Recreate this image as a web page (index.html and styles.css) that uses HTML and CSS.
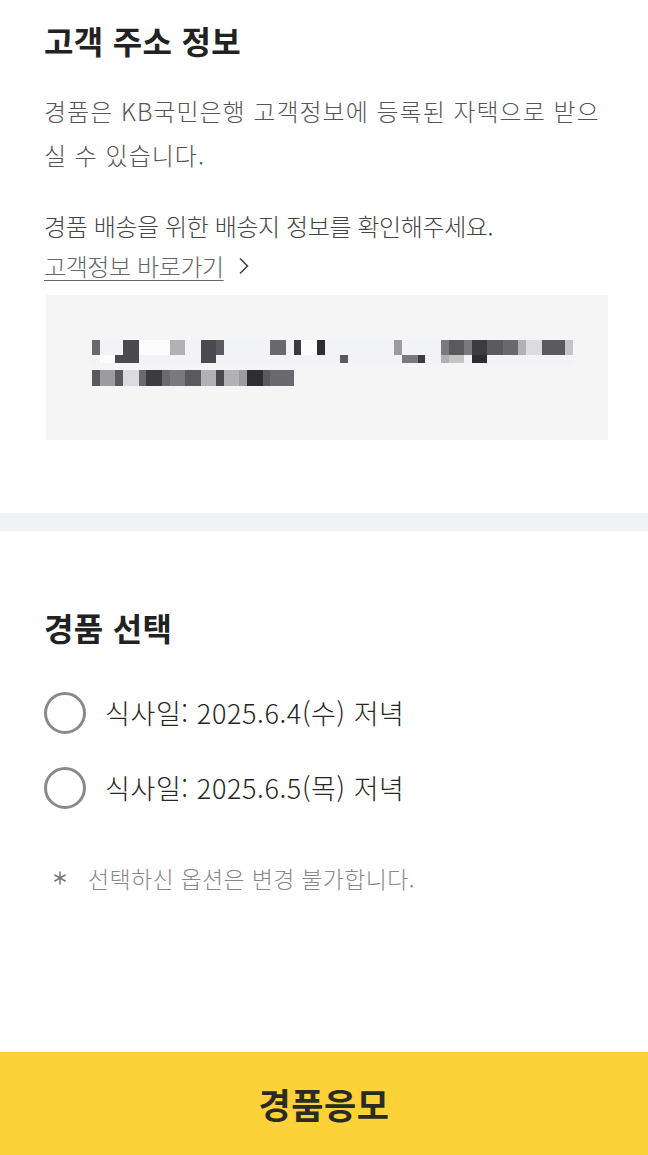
FILE: index.html
```html
<!DOCTYPE html>
<html lang="ko">
<head>
  <meta charset="UTF-8">
  <meta name="viewport" content="width=device-width, initial-scale=1.0">
  <title>경품응모</title>
  <link rel="stylesheet" href="styles.css">
</head>
<body>
  <div class="page">
    <div class="section address">
      <h2 class="title">고객 주소 정보</h2>
      <p class="desc">경품은 KB국민은행 고객정보에 등록된 자택으로 받으<br>실 수 있습니다.</p>
      <p class="guide">경품 배송을 위한 배송지 정보를 확인해주세요.</p>
      <a class="link" href="#">고객정보 바로가기
        <svg class="chev" width="12" height="18" viewBox="0 0 12 18"><path d="M2 1.5 L9.5 9 L2 16.5" fill="none" stroke="#444" stroke-width="1.6"/></svg>
      </a>
      <!-- masked address -->
      <div class="addr-box">
        <div class="mosaic row-a">
          <span class="w1 g5"></span><span class="w3 l"></span><span class="w2 g7"></span><span class="w4 wh"></span><span class="w2 g2"></span><span class="w2 l"></span><span class="w2 g7"></span><span class="w1 g6"></span><span class="w6 l"></span><span class="w2 g5"></span><span class="w1 l"></span><span class="w1 g8"></span><span class="w2 wh"></span><span class="w1 g9"></span><span class="w9 l"></span><span class="w1 g3"></span><span class="w5 l"></span><span class="w1 g4"></span><span class="w2 g6"></span><span class="w1 g4"></span><span class="w2 g8"></span><span class="w2 g6"></span><span class="w2 g5"></span><span class="w1 g2"></span><span class="w2 e"></span><span class="w3 g6"></span><span class="w1 g1"></span>
        </div>
        <div class="mosaic row-b">
          <span class="w1 l"></span><span class="w2 wh"></span><span class="w3 g7"></span><span class="w8 l"></span><span class="w2 g7"></span><span class="w16 l"></span><span class="w1 g6"></span><span class="w7 l"></span><span class="w2 g4"></span><span class="w1 g8"></span><span class="w2 l"></span><span class="w1 g2"></span><span class="w2 g1"></span><span class="w1 l"></span><span class="w2 g9"></span><span class="w11 l"></span>
        </div>
        <div class="mosaic row-c">
          <span class="w1 g6"></span><span class="w2 g3"></span><span class="w1 g6"></span><span class="w2 e"></span><span class="w1 g5"></span><span class="w2 g8"></span><span class="w1 g5"></span><span class="w2 g4"></span><span class="w2 g6"></span><span class="w2 g2"></span><span class="w1 g7"></span><span class="w2 g2"></span><span class="w1 g3"></span><span class="w2 g9"></span><span class="w1 g6"></span><span class="w3 g5"></span>
        </div>
      </div>
    </div>

    <div class="divider"></div>

    <div class="section gift">
      <h2 class="title">경품 선택</h2>
      <ul class="options">
        <li class="option"><span class="radio"></span>식사일: 2025.6.4(수) 저녁</li>
        <li class="option"><span class="radio"></span>식사일: 2025.6.5(목) 저녁</li>
      </ul>
      <p class="note">
        <svg class="star" width="16" height="16" viewBox="0 0 16 16"><path d="M8 1.5 V14.5 M2.4 4.75 L13.6 11.25 M2.4 11.25 L13.6 4.75" fill="none" stroke="#777" stroke-width="1.5"/></svg>
        선택하신 옵션은 변경 불가합니다.
      </p>
    </div>

    <button class="apply">경품응모</button>
  </div>
</body>
</html>
```

FILE: styles.css
```css
* {
  margin: 0;
  padding: 0;
  box-sizing: border-box;
}
body {
  font-family: "Noto Sans CJK KR", "Noto Sans", sans-serif;
  background: #fff;
  color: #333;
}
.page {
  min-height: 1155px;
  display: flex;
  flex-direction: column;
}
.title {
  font-size: 32px;
  font-weight: 700;
  line-height: 40px;
  color: #222;
  letter-spacing: 0.3px;
}
.address {
  padding: 20px 40px 0 44px;
}
.desc {
  margin-top: 29px;
  font-size: 24px;
  line-height: 44px;
  color: #555;
  font-weight: 300;
  letter-spacing: 1px;
}
.guide {
  margin-top: 29px;
  font-size: 24px;
  line-height: 40px;
  color: #444;
  font-weight: 300;
  letter-spacing: -0.4px;
}
.link {
  display: inline-flex;
  align-items: center;
  font-size: 24px;
  line-height: 40px;
  color: #666;
  font-weight: 300;
  letter-spacing: -0.4px;
  text-decoration: underline;
  text-underline-offset: 4px;
  text-decoration-thickness: 1px;
}
.chev {
  margin-left: 14px;
}
.addr-box {
  margin: 9px 0 0 2px;
  height: 145px;
  background: #f5f5f5;
  padding: 45px 0 0 46px;
}
.mosaic {
  display: flex;
}
.row-a { height: 15px; }
.row-b { height: 8px; }
.row-c { height: 16px; margin-top: 7px; }
.mosaic span { display: block; height: 100%; }
.w1 { width: 7.75px; }
.w2 { width: 15.5px; }
.w3 { width: 23.25px; }
.w4 { width: 31px; }
.w5 { width: 38.75px; }
.w6 { width: 46.5px; }
.w7 { width: 54.25px; }
.w8 { width: 62px; }
.w9 { width: 69.75px; }
.w11 { width: 85.25px; }
.w16 { width: 124px; }
.l { background: #f2f3f6; }
.wh { background: #fcfcfd; }
.e { background: #dcdce0; }
.g1 { background: #c4c4c6; }
.g2 { background: #b2b2b4; }
.g3 { background: #9c9ca0; }
.g4 { background: #7a7a7e; }
.g5 { background: #6a6a6e; }
.g6 { background: #5a5a5e; }
.g7 { background: #4a4a50; }
.g8 { background: #3c3c40; }
.g9 { background: #2e2e32; }
.divider {
  margin-top: 73px;
  height: 18px;
  background: #f1f2f4;
}
.gift {
  padding: 76px 40px 0 44px;
}
.options {
  list-style: none;
  margin-top: 28px;
}
.option {
  display: flex;
  align-items: center;
  height: 75px;
  font-size: 27px;
  color: #262626;
  font-weight: 300;
  letter-spacing: 0.6px;
}
.radio {
  width: 42px;
  height: 42px;
  border: 3px solid #878a8e;
  border-radius: 50%;
  margin-right: 19px;
  flex-shrink: 0;
}
.note {
  margin-top: 38px;
  display: flex;
  align-items: center;
  font-size: 23px;
  line-height: 30px;
  color: #888;
  font-weight: 300;
  letter-spacing: 0.3px;
  padding-left: 8px;
}
.star {
  margin-right: 20px;
}
.apply {
  margin-top: auto;
  height: 103px;
  width: 100%;
  border: none;
  background: #fdd138;
  color: #2b2a24;
  font-family: inherit;
  font-size: 35px;
  font-weight: 700;
  letter-spacing: 0.5px;
}
```
